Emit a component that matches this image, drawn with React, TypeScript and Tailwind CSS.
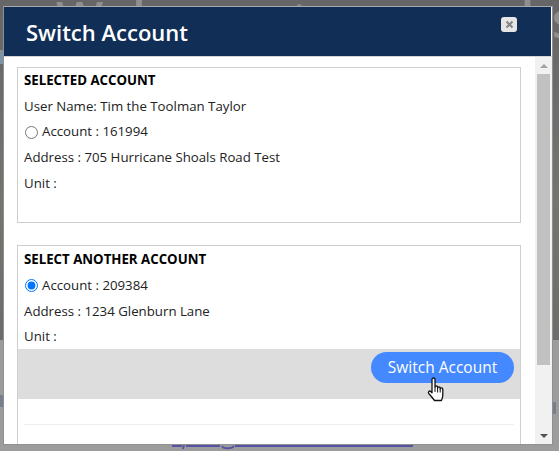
import { useState } from "react";

function HandCursor() {
  return (
    <svg width="20" height="26" viewBox="0 0 20 26" className="absolute left-[427px] top-[377px]">
      <path
        d="M5 2.500c0-2 3-2 3 0V10c0-1.500 2.600-1.500 2.600 0v1c0-1.500 2.600-1.500 2.600 0v1c0-1.400 2.600-1.400 2.600.2V18c0 2.500-.6 3.500-1.400 5.500H7.500C6 21.500 4 19 1.800 16.500c-1.200-1.500.6-3.300 2-2L5 15.700z"
        fill="#fff"
        stroke="#111"
        strokeWidth="1.300"
        strokeLinejoin="round"
      />
      <path d="M8 10v5M10.600 11v4.500M13.200 12v3.500" stroke="#111" strokeWidth="1" fill="none" />
    </svg>
  );
}

function Row({ children }: { children: React.ReactNode }) {
  return <p className="mb-[7px] h-[18.75px] leading-[18.75px]">{children}</p>;
}

function RadioRow({ account, checked }: { account: string; checked: boolean }) {
  const [on, setOn] = useState(checked);
  return (
    <label className="mb-[7px] flex h-[18.75px] items-center pt-px">
      <input
        type="radio"
        checked={on}
        onChange={() => setOn(true)}
        className="m-0 ml-px mr-[4px] h-[13px] w-[13px]"
      />
      Account : {account}
    </label>
  );
}

export default function App() {
  return (
    <div className="relative h-[451px] w-[559px] overflow-hidden bg-[#9c9c9c] pl-[3px] pt-[6px] font-['Open_Sans',sans-serif] text-[13.25px] text-[#222]">
      {/* page behind the dialog */}
      <div className="absolute inset-x-0 top-0 h-[340px] bg-[linear-gradient(180deg,#666669_0%,#6e6e6c_35%,#75756f_60%,#6c6d6a_100%)]" />
      <div className="absolute left-[56px] top-[-11px] whitespace-nowrap text-[50px] font-semibold leading-[60px] text-[#8f8f8f]">
        Welcome to our website!
      </div>
      <svg width="241" height="6" viewBox="0 0 241 6" className="absolute left-[172px] top-[444px]">
        <path
          d="M0 2h10M14 2h34M63 2h178M12 1l-1 4M50 2c1 3 10 3 12 0M108 2l3-1 3 1"
          stroke="#5553a3"
          strokeWidth="2"
          fill="none"
        />
      </svg>
      <div className="absolute left-0 top-[395px] h-[12px] w-[3px] bg-[#76808c]" />
      <div className="absolute left-0 top-[50px] h-[14px] w-[3px] bg-[#7f95a6]" />
      <div className="absolute left-[553px] top-[402px] h-[12px] w-[3px] bg-[#76808c]" />

      <div className="relative flex h-[439px] w-[550px] flex-col border border-[#8f8f8f] border-t-[#a8a8a8] bg-white">
        <header className="mr-px flex h-[49px] shrink-0 items-center justify-between bg-[#112e57] pl-[22px] pr-[34px]">
          <h1 className="text-[22px] font-semibold leading-[30px] text-white">Switch Account</h1>
          <button className="mb-[14px] flex h-[15px] w-[16px] items-center justify-center rounded-[3px] bg-[#e6e6e6]">
            <svg width="9" height="9" viewBox="0 0 9 9">
              <path d="M1.500 1.500l6 6M7.500 1.500l-6 6" stroke="#858585" strokeWidth="2" />
            </svg>
          </button>
        </header>
        <div className="h-px shrink-0 bg-[#d5d5d5]" />

        <div className="flex min-h-0 flex-1">
          <div className="min-w-0 flex-1 overflow-hidden pl-[13px] pr-[14px] pt-[10px]">
            <section className="mb-[22px] h-[156px] border border-[#cfcfcf] px-[6px] pt-[3px]">
              <h2 className="mb-[7px] h-[18.75px] font-bold uppercase leading-[18.75px] text-black">Selected Account</h2>
              <Row>User Name: Tim the Toolman Taylor</Row>
              <RadioRow account="161994" checked={false} />
              <Row>Address : 705 Hurricane Shoals Road Test</Row>
              <Row>Unit :</Row>
            </section>

            <section className="h-[210px] border border-[#cfcfcf] pt-[4px]">
              <div className="px-[6px]">
                <h2 className="mb-[7px] h-[18.75px] font-bold uppercase leading-[18.75px] text-black">
                  Select Another Account
                </h2>
                <RadioRow account="209384" checked />
                <Row>Address : 1234 Glenburn Lane</Row>
                <p className="h-[18.75px] leading-[18.75px]">Unit :</p>
              </div>
              <div className="mt-[3px] flex h-[50px] justify-end bg-[#dddddd] pr-[6px] pt-[3px]">
                <button className="h-[31px] w-[143px] rounded-full bg-[#4489ff] text-[15.5px] text-white">
                  Switch Account
                </button>
              </div>
              <hr className="mx-[6px] mt-[25px] border-[#eeeeee]" />
            </section>
          </div>

          <div className="flex w-[17px] shrink-0 flex-col items-center bg-[#f1f1f1]">
            <div className="flex h-[17px] items-center justify-center">
              <div className="h-0 w-0 border-x-[4px] border-b-[4px] border-x-transparent border-b-[#a3a3a3]" />
            </div>
            <div className="h-[291px] w-[13px] bg-[#c1c1c1]" />
            <div className="flex-1" />
            <div className="flex h-[17px] items-center justify-center">
              <div className="h-0 w-0 border-x-[4px] border-t-[4px] border-x-transparent border-t-[#505050]" />
            </div>
          </div>
        </div>
      </div>

      <HandCursor />
    </div>
  );
}
